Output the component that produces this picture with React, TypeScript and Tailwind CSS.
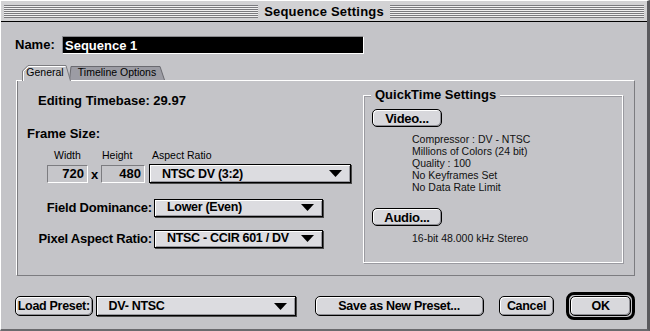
import React from "react"

const sys = "font-['Liberation_Sans',Arial,sans-serif]"

function Arrow() {
  return (
    <svg width="13" height="7" viewBox="0 0 13 7" className="shrink-0">
      <path d="M0 0H13L6.5 7Z" fill="#000" />
    </svg>
  )
}

function Popup({ label, className }: { label: string; className: string }) {
  return (
    <div
      className={`flex items-center justify-between border border-black bg-[#dcdce0] pl-[12px] pr-[8px] shadow-[1px_1px_0_#4a4a4a,inset_1px_1px_0_#fff,inset_-1px_-1px_0_#9a9aa0] text-[12.5px] tracking-[-0.3px] font-bold text-black whitespace-nowrap ${className}`}
    >
      <span className="leading-none">{label}</span>
      <Arrow />
    </div>
  )
}

function Button({ label, className }: { label: string; className: string }) {
  return (
    <div
      className={`flex items-center justify-center rounded-[5px] border border-black bg-[#d8d8dc] shadow-[inset_1px_1px_0_#fff,inset_-1px_-1px_0_#8e8e94] text-[12.5px] tracking-[-0.3px] font-bold text-black leading-none whitespace-nowrap ${className}`}
    >
      {label}
    </div>
  )
}

function Field({ value, className }: { value: string; className: string }) {
  return (
    <div
      className={`flex items-center justify-end border-t border-l border-[#7c7c80] border-b border-r border-b-white border-r-white bg-[#c6c6ca] pr-[3px] text-[13px] font-bold leading-none ${className}`}
    >
      {value}
    </div>
  )
}

export default function App() {
  return (
    <div className={`w-[650px] h-[331px] bg-[#c4c4c8] ${sys} text-black overflow-hidden`}>
      <div className="w-full h-full border-l border-t border-white border-r-[3px] border-r-[#5a5a5e] border-b-[2px] border-b-[#6a6a6e] flex flex-col">
        {/* title bar */}
        <div className="h-[21px] bg-[#d2d2d4] border-b border-black flex items-center px-[3px] gap-[6px]">
          <div className="flex-1 h-[13px] bg-[repeating-linear-gradient(to_bottom,#7a7a7e_0px,#7a7a7e_1px,#f0f0f0_1px,#f0f0f0_2px)]" />
          <span className="text-[13px] font-bold tracking-[0.2px] leading-none">Sequence Settings</span>
          <div className="flex-1 h-[13px] bg-[repeating-linear-gradient(to_bottom,#7a7a7e_0px,#7a7a7e_1px,#f0f0f0_1px,#f0f0f0_2px)]" />
        </div>

        <div className="flex-1 flex flex-col pl-[14px] pr-[12px]">
          {/* name */}
          <div className="flex items-center mt-[14px] h-[18px]">
            <span className="text-[13px] font-bold w-[47px]">Name:</span>
            <div className="w-[302px] h-[18px] bg-black border border-[#8a8a8e] border-b-white border-r-white flex items-center pl-[2px]">
              <span className="text-white text-[13px] font-bold leading-none">Sequence 1</span>
            </div>
          </div>

          {/* tabs */}
          <div className="flex items-end mt-[11px] ml-[7px] h-[15px] text-[10.5px]">
            <div className="relative w-[49px] h-[15px] flex items-center justify-center z-10">
              <svg className="absolute inset-0" width="49" height="16" viewBox="0 0 49 16">
                <path d="M0.5 16V6L6 0.5H44L48.5 16" fill="#c4c4c8" stroke="#7c7c80" />
                <path d="M1.5 16V6.5L6.5 1.5H43.5" fill="none" stroke="#fff" />
              </svg>
              <span className="relative pr-[3px]">General</span>
            </div>
            <div className="relative -ml-[2px] w-[96px] h-[14px] flex items-center justify-center">
              <svg className="absolute inset-0" width="96" height="14" viewBox="0 0 96 14">
                <path d="M0.5 14L2 0.5H91L95.5 14" fill="#9c9ca4" stroke="#6a6a70" />
              </svg>
              <span className="relative">Timeline Options</span>
            </div>
          </div>

          {/* tab panel */}
          <div className="w-[619px] h-[196px] ml-[1px] border-l border-t border-white border-r border-b border-r-[#7c7c80] border-b-[#7c7c80] shadow-[inset_1px_0_0_#7c7c80] flex">
            <div className="w-[346px] flex flex-col">
              <div className="ml-[21px] mt-[12px] text-[13px] font-bold leading-[15px]">Editing Timebase: 29.97</div>
              <div className="ml-[10px] mt-[18px] text-[13px] font-bold leading-[15px]">Frame Size:</div>
              <div className="flex ml-[36px] mt-[9px] text-[10.5px] leading-[10px]">
                <span className="w-[49px] pl-[1px]">Width</span>
                <span className="w-[50px]">Height</span>
                <span>Aspect Ratio</span>
              </div>
              <div className="flex items-center ml-[30px] mt-[3px]">
                <Field value="720" className="w-[41px] h-[18px]" />
                <span className="w-[13px] text-center text-[13px] font-bold mt-[2px]">x</span>
                <Field value="480" className="w-[44px] h-[18px]" />
                <Popup label="NTSC DV (3:2)" className="ml-[4px] w-[202px] h-[19px]" />
              </div>
              <div className="flex items-center mt-[14px] h-[18px]">
                <span className="w-[137px] text-right pr-[2px] text-[13px] tracking-[-0.2px] font-bold">Field Dominance:</span>
                <Popup label="Lower (Even)" className="w-[169px] h-[18px]" />
              </div>
              <div className="flex items-center mt-[13px] h-[18px]">
                <span className="w-[137px] text-right pr-[2px] text-[13px] tracking-[-0.2px] font-bold">Pixel Aspect Ratio:</span>
                <Popup label="NTSC - CCIR 601 / DV" className="w-[169px] h-[18px]" />
              </div>
            </div>

            {/* quicktime group */}
            <div className="relative mt-[14px] w-[260px] h-[168px] border border-white shadow-[inset_1px_1px_0_#9a9aa0,1px_1px_0_#9a9aa0] flex flex-col pl-[8px]">
              <span className="absolute -top-[9px] left-[7px] px-[4px] bg-[#c4c4c8] text-[13px] font-bold leading-[16px]">QuickTime Settings</span>
              <Button label="Video..." className="mt-[13px] w-[70px] h-[18px] text-[13px]" />
              <div className="ml-[40px] mt-[6px] text-[10.5px] leading-[12px] text-[#111]">
                <div>Compressor : DV - NTSC</div>
                <div>Millions of Colors (24 bit)</div>
                <div>Quality : 100</div>
                <div>No Keyframes Set</div>
                <div>No Data Rate Limit</div>
              </div>
              <Button label="Audio..." className="mt-[15px] w-[70px] h-[18px] text-[13px]" />
              <div className="ml-[40px] mt-[6px] text-[10.5px] leading-[12px] text-[#111]">16-bit 48.000 kHz Stereo</div>
            </div>
          </div>

          {/* bottom row */}
          <div className="flex items-center mt-[16px] h-[28px]">
            <Button label="Load Preset:" className="w-[78px] h-[20px]" />
            <Popup label="DV- NTSC" className="ml-[3px] w-[201px] h-[20px]" />
            <Button label="Save as New Preset..." className="ml-[19px] w-[170px] h-[20px]" />
            <Button label="Cancel" className="ml-[15px] w-[56px] h-[20px]" />
            <div className="ml-[12px] rounded-[8px] border-[3px] border-black p-[1px] w-[69px] h-[28px]">
              <Button label="OK" className="w-full h-full" />
            </div>
          </div>
        </div>
      </div>
    </div>
  )
}
